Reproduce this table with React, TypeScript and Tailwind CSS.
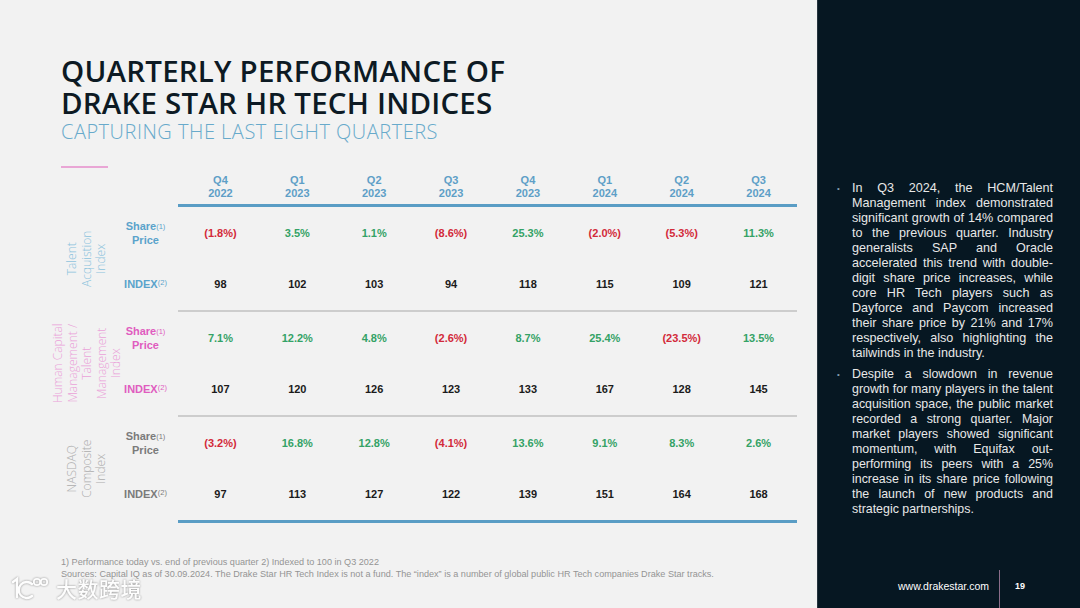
import React from "react";

type Cell = { v: string; c: "g" | "r" | "k" };

const quarters = [
  ["Q4", "2022"],
  ["Q1", "2023"],
  ["Q2", "2023"],
  ["Q3", "2023"],
  ["Q4", "2023"],
  ["Q1", "2024"],
  ["Q2", "2024"],
  ["Q3", "2024"],
];

const pct = (s: string): Cell => ({ v: s, c: s.startsWith("(") ? "r" : "g" });
const num = (s: string): Cell => ({ v: s, c: "k" });

const groups = [
  {
    label: ["Talent", "Acquistion", "Index"],
    labelCls: "text-[#8cc3dd]",
    rowCls: "text-[#5aa3cb]",
    share: ["(1.8%)", "3.5%", "1.1%", "(8.6%)", "25.3%", "(2.0%)", "(5.3%)", "11.3%"].map(pct),
    index: ["98", "102", "103", "94", "118", "115", "109", "121"].map(num),
  },
  {
    label: ["Human Capital", "Management /", "Talent", "Management", "Index"],
    labelCls: "text-[#eaa2d9]",
    rowCls: "text-[#e05cbf]",
    share: ["7.1%", "12.2%", "4.8%", "(2.6%)", "8.7%", "25.4%", "(23.5%)", "13.5%"].map(pct),
    index: ["107", "120", "126", "123", "133", "167", "128", "145"].map(num),
  },
  {
    label: ["NASDAQ", "Composite", "Index"],
    labelCls: "text-[#adadad]",
    rowCls: "text-[#7b7b7b]",
    share: ["(3.2%)", "16.8%", "12.8%", "(4.1%)", "13.6%", "9.1%", "8.3%", "2.6%"].map(pct),
    index: ["97", "113", "127", "122", "139", "151", "164", "168"].map(num),
  },
];

const colorOf = (c: Cell["c"]) =>
  c === "g" ? "text-[#34a266]" : c === "r" ? "text-[#d22a3a]" : "text-[#1b1b1b]";

function DataRow({ label, cells, rowCls }: { label: React.ReactNode; cells: Cell[]; rowCls: string }) {
  return (
    <div className="flex flex-1 items-center">
      <div className={`w-[65px] text-center text-[11px] font-bold leading-[14px] ${rowCls}`}>{label}</div>
      <div className="flex flex-1 pl-[4px]">
        {cells.map((cell, i) => (
          <div key={i} className={`flex-1 text-center text-[11px] font-bold ${colorOf(cell.c)}`}>
            {cell.v}
          </div>
        ))}
      </div>
    </div>
  );
}

export default function App() {
  return (
    <div
      className="relative flex w-[1080px] h-[608px] overflow-hidden"
      style={{ fontFamily: '"Liberation Sans", Arial, sans-serif' }}
    >
      {/* Left slide area */}
      <div className="flex flex-col w-[817px] h-full bg-[#f2f2f2]">
        <div className="pl-[61px] pt-[55px]" style={{ fontFamily: '"Open Sans", sans-serif' }}>
          <div className="text-[29.5px] leading-[32px] font-semibold text-[#0d1a24] tracking-[0.2px]">
            <div>QUARTERLY PERFORMANCE OF</div>
            <div>DRAKE STAR HR TECH INDICES</div>
          </div>
          <div className="mt-[2px] text-[20px] leading-[22px] font-light text-[#68aacb] tracking-[0.5px]">
            CAPTURING THE LAST EIGHT QUARTERS
          </div>
          <div className="mt-[23px] w-[47px] h-[2px] bg-[#e9a6d5]" />
        </div>

        {/* Table */}
        <div className="ml-[55px] mt-[2px] w-[742px] flex flex-col">
          <div className="flex h-[34px] items-center">
            <div className="w-[123px]" />
            <div className="flex flex-1 pl-[4px]">
              {quarters.map((q, i) => (
                <div key={i} className="flex-1 text-center text-[11px] leading-[13px] font-bold text-[#5e9fc7]">
                  <div>{q[0]}</div>
                  <div>{q[1]}</div>
                </div>
              ))}
            </div>
          </div>
          <div className="ml-[123px] h-[3px] bg-[#5a9dc5]" />

          {groups.map((g, gi) => (
            <React.Fragment key={gi}>
              {gi > 0 && <div className="ml-[123px] h-[2px] bg-[#cdcdcd]" />}
              <div className="flex h-[103px]">
                <div className="w-[64px] flex items-center justify-center">
                  <div
                    className={`-rotate-90 whitespace-nowrap text-center text-[12px] leading-[14.5px] font-light ${g.labelCls}`}
                    style={{ fontFamily: '"Open Sans", sans-serif' }}
                  >
                    {g.label.map((l, i) => (
                      <div key={i}>{l}</div>
                    ))}
                  </div>
                </div>
                <div className="flex flex-col flex-1 -ml-[6px]">
                  <DataRow
                    rowCls={g.rowCls}
                    cells={g.share}
                    label={
                      <>
                        <div>
                          Share<sup className="text-[7.5px] font-normal relative -top-[1px]">(1)</sup>
                        </div>
                        <div>Price</div>
                      </>
                    }
                  />
                  <DataRow
                    rowCls={g.rowCls}
                    cells={g.index}
                    label={
                      <div>
                        INDEX<sup className="text-[7.5px] font-normal">(2)</sup>
                      </div>
                    }
                  />
                </div>
              </div>
            </React.Fragment>
          ))}
          <div className="ml-[123px] h-[3px] bg-[#5a9dc5]" />
        </div>

        <div className="pl-[61px] mt-[33px] text-[9.1px] leading-[12px] text-[#949494]">
          <div>1) Performance today vs. end of previous quarter 2) Indexed to 100 in Q3 2022</div>
          <div>
            Sources: Capital IQ as of 30.09.2024. The Drake Star HR Tech Index is not a fund. The “index” is a number of
            global public HR Tech companies Drake Star tracks.
          </div>
        </div>
      </div>

      {/* Right dark panel */}
      <div className="flex flex-col w-[263px] h-full bg-[#061722] border-l border-[#26343e] text-[#e8e8e8]">
        <div className="flex flex-col pt-[181px] pl-[19px] pr-[27px] leading-[15px]">
          <div className="flex text-[12.6px]">
            <div className="w-[15px] shrink-0 text-[#7f9bb0] text-[8px]">•</div>
            <p className="text-justify">
              In Q3 2024, the HCM/Talent Management index demonstrated significant growth of 14% compared to the
              previous quarter. Industry generalists SAP and Oracle accelerated this trend with double-digit share price
              increases, while core HR Tech players such as Dayforce and Paycom increased their share price by 21% and
              17% respectively, also highlighting the tailwinds in the industry.
            </p>
          </div>
          <div className="flex mt-[6px] text-[12.4px]">
            <div className="w-[15px] shrink-0 text-[#7f9bb0] text-[8px]">•</div>
            <p className="text-justify">
              Despite a slowdown in revenue growth for many players in the talent acquisition space, the public market
              recorded a strong quarter. Major market players showed significant momentum, with Equifax out-performing
              its peers with a 25% increase in its share price following the launch of new products and strategic
              partnerships.
            </p>
          </div>
        </div>
        <div className="mt-auto flex items-stretch h-[38px]">
          <div className="w-[80px]" />
          <div className="flex items-center pb-[4px] text-[10.5px] font-medium text-white w-[101px]">
            www.drakestar.com
          </div>
          <div className="w-px bg-[#8b6d8a]" />
          <div className="flex items-center pb-[4px] pl-[15px] text-[9px] font-bold text-white">19</div>
        </div>
      </div>

      {/* Watermark overlay */}
      <div className="absolute left-[10px] top-[575px] flex items-center gap-[4px] opacity-90 drop-shadow-[0_0_1px_rgba(0,0,0,0.45)]">
        <svg width="42" height="26" viewBox="0 0 42 26" fill="none" stroke="#ffffff" strokeWidth="2.4" strokeLinecap="round">
          <path d="M3 7 L7 4 L7 22" />
          <path d="M22 9 A8 8 0 1 0 22 21" />
          <circle cx="27" cy="7" r="3.2" strokeWidth="1.8" />
          <circle cx="34" cy="7" r="3.2" strokeWidth="1.8" />
        </svg>
        <span
          className="text-[21px] leading-[24px] text-white font-medium tracking-[0.5px]"
          style={{ fontFamily: '"Noto Sans CJK SC", sans-serif' }}
        >
          大数跨境
        </span>
      </div>
    </div>
  );
}
